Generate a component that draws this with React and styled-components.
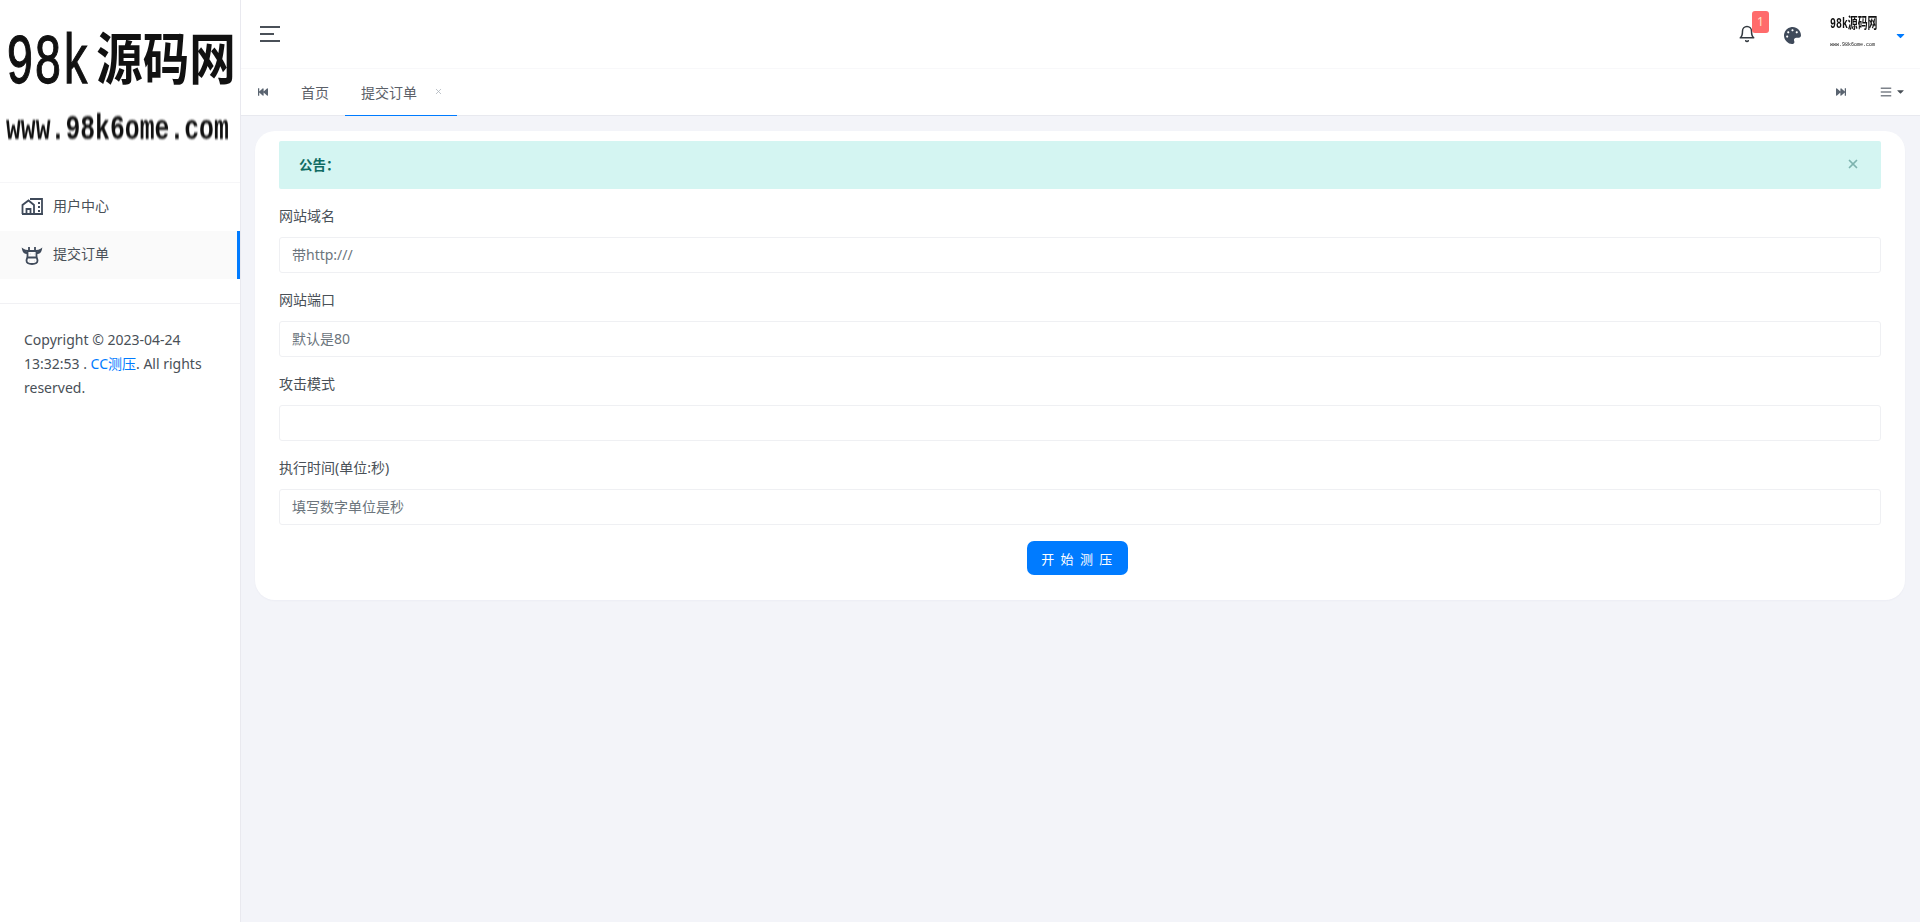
import React from 'react';
import styled, { createGlobalStyle } from 'styled-components';
import { FaPalette, FaFastBackward, FaFastForward, FaBars, FaCaretDown } from 'react-icons/fa';
import { FiBell, FiX } from 'react-icons/fi';

const GlobalStyle = createGlobalStyle`
  html, body {
    margin: 0;
    height: 100%;
    background: #f3f4f9;
    font-family: "Noto Sans", "Noto Sans CJK SC", sans-serif;
    font-size: 14px;
    color: #495057;
  }
  * { box-sizing: border-box; }
`;

const Page = styled.div`
  display: flex;
  height: 922px;
  overflow: hidden;
`;

const Sidebar = styled.aside`
  flex: 0 0 241px;
  width: 241px;
  min-width: 0;
  overflow: hidden;
  background: #fff;
  border-right: 1px solid #e9e9ef;
`;

const LogoBox = styled.div`
  height: 183px;
  border-bottom: 1px solid #f6f6f8;
  padding: 29px 0 0 6px;
`;

const LogoMain = styled.div`
  font-family: "Liberation Mono", "Noto Sans CJK SC", monospace;
  font-weight: 700;
  font-size: 56px;
  line-height: 70px;
  color: #111;
  white-space: nowrap;
  transform-origin: left top;
  transform: scaleX(0.83);
  filter: blur(0.7px);
`;

const LogoDigits = styled.span`
  display: inline-block;
  font-weight: 400;
  -webkit-text-stroke: 1px #111;
  transform: scaleY(1.25);
  margin-right: 8px;
`;

const LogoSub = styled.div`
  font-family: "Liberation Mono", monospace;
  font-weight: 700;
  font-size: 25px;
  line-height: 30px;
  margin-top: 17px;
  color: #111;
  white-space: nowrap;
  transform-origin: left center;
  transform: scale(0.99, 1.4);
  filter: blur(0.6px);
`;

const Nav = styled.nav`
  padding-bottom: 24px;
  border-bottom: 1px solid #f1f1f4;
`;

const NavItem = styled.div`
  display: flex;
  align-items: center;
  height: 48px;
  padding: 0 0 5px 21px;
  background: ${(p) => (p.$active ? '#fafafa' : '#fff')};
  border-right: 3px solid ${(p) => (p.$active ? '#007bff' : 'transparent')};
  color: #495057;
`;

const NavIcon = styled.svg`
  width: 22px;
  height: 22px;
  margin-top: 3px;
  margin-right: 10px;
  color: #3f4a5a;
`;

const Copy = styled.p`
  margin: 24px 20px 0 24px;
  font-size: 14px;
  line-height: 24px;
  color: #495057;
`;

const CopyLink = styled.a`
  color: #007bff;
`;

const Main = styled.main`
  flex: 1;
  min-width: 0;
`;

const Header = styled.header`
  display: flex;
  align-items: center;
  justify-content: space-between;
  height: 69px;
  padding: 0 0 0 19px;
  background: #fff;
  border-bottom: 1px solid #f8f8fa;
`;

const Burger = styled.div`
  display: flex;
  flex-direction: column;
  gap: 5px;
  width: 20px;
`;

const BurgerLine = styled.span`
  display: block;
  height: 2px;
  width: ${(p) => p.$w}px;
  background: #4a5058;
`;

const HeaderRight = styled.div`
  display: flex;
  align-items: center;
`;

const BellWrap = styled.div`
  position: relative;
  display: flex;
  width: 18px;
  height: 20px;
  margin-right: 28px;
  margin-top: 2px;
  color: #343a40;
`;

const Badge = styled.span`
  position: absolute;
  left: 14px;
  top: -14px;
  width: 17px;
  height: 22px;
  border-radius: 3px;
  background: #ff6b6b;
  color: #ffe3c8;
  font-size: 12px;
  line-height: 22px;
  text-align: center;
`;

const Palette = styled(FaPalette)`
  width: 17px;
  height: 17px;
  margin-right: 29px;
  margin-top: 2px;
  color: #3f4a5a;
`;

const Avatar = styled.div`
  width: 50px;
  height: 36px;
  margin-top: -3px;
  filter: blur(0.3px);
`;

const AvatarMain = styled.div`
  font-family: "Liberation Mono", "Noto Sans CJK SC", monospace;
  font-weight: 700;
  font-size: 15px;
  line-height: 20px;
  color: #111;
  white-space: nowrap;
  transform-origin: left top;
  transform: scaleX(0.66);
`;

const AvatarSub = styled.div`
  font-family: "Liberation Mono", monospace;
  font-size: 5px;
  line-height: 8px;
  margin-top: 6px;
  color: #111;
  white-space: nowrap;
`;

const UserCaret = styled(FaCaretDown)`
  width: 13px;
  height: 13px;
  margin: 2px 13px 0 14px;
  color: #007bff;
`;

const TabBar = styled.div`
  display: flex;
  align-items: center;
  height: 47px;
  background: #fff;
  border-bottom: 1px solid #e8e9ef;
`;

const TabArrow = styled.span`
  display: flex;
  width: ${(p) => p.$w}px;
  justify-content: center;
  color: #5a6470;
  font-size: 10px;
`;

const Tab = styled.div`
  display: flex;
  align-items: center;
  align-self: stretch;
  padding: 0 16px 1px;
  margin-bottom: -1px;
  color: #5b6068;
  border-bottom: 1px solid ${(p) => (p.$active ? '#007bff' : 'transparent')};
`;

const TabClose = styled(FiX)`
  width: 9px;
  height: 9px;
  margin-left: 17px;
  margin-right: -2px;
  color: #aab0b8;
`;

const TabSpacer = styled.div`
  flex: 1;
`;

const TabMenu = styled.span`
  display: flex;
  align-items: center;
  gap: 3px;
  width: 40px;
  margin-left: 20px;
  color: #7d828a;
  font-size: 12px;
`;

const MenuCaret = styled(FaCaretDown)`
  width: 11px;
  height: 11px;
  margin-top: -2px;
  color: #495057;
`;

const Card = styled.section`
  margin: 15px 15px 0 14px;
  padding: 10px 24px 25px;
  background: #fff;
  border-radius: 20px;
  box-shadow: 0 1px 2px rgba(30, 40, 80, 0.03);
`;

const Alert = styled.div`
  display: flex;
  align-items: center;
  justify-content: space-between;
  height: 48px;
  padding: 0 21px 2px 20px;
  margin-bottom: 17px;
  background: #d4f5f2;
  border-radius: 2px;
  color: #0f6b62;
  font-weight: 700;
  font-size: 13.5px;
`;

const AlertClose = styled(FiX)`
  width: 14px;
  height: 14px;
  color: #7eb3af;
  stroke-width: 3;
`;

const Field = styled.div`
  margin-bottom: 17px;
`;

const Label = styled.label`
  display: block;
  height: 21px;
  line-height: 20px;
  margin-bottom: 10px;
  color: #495057;
`;

const Input = styled.input`
  display: block;
  width: 100%;
  height: 36px;
  padding: 0 12px 2px;
  border: 1px solid #eff0f3;
  border-radius: 3px;
  background: #fff;
  font: inherit;
  outline: none;
  &::placeholder {
    color: #6c757d;
    opacity: 1;
  }
`;

const Actions = styled.div`
  display: flex;
  justify-content: center;
`;

const Submit = styled.button`
  width: 101px;
  height: 34px;
  margin: -1px 5px 0 0;
  border: 0;
  border-radius: 7px;
  background: #007bff;
  color: #fff;
  font-family: inherit;
  font-size: 13px;
  letter-spacing: 1.5px;
`;

const HouseIcon = () => (
  <NavIcon viewBox="0 0 22 18" fill="none" stroke="currentColor" strokeWidth="1.8">
    <path d="M1 17h21M1.500 17V8L7.500 3.500 13 8v9" />
    <path d="M5.500 17v-5h4v5" />
    <path d="M9 2h12v15" />
    <path d="M17 6h2M17 10h2M17 14h2" />
  </NavIcon>
);

const CowIcon = () => (
  <NavIcon viewBox="0 0 22 22" fill="none" stroke="currentColor" strokeWidth="1.8">
    <path d="M6 10c-2 0-3.500-1-4-3.500 1.500 1 3 1.500 5 1.500h8c2 0 3.500-.5 5-1.500-.5 2.500-2 3.500-4 3.500" />
    <path d="M6.500 8v5c0 2-1 3-1 4.500C5.500 19.500 7 21 11 21s5.500-1.500 5.500-3.500c0-1.500-1-2.500-1-4.500V8" />
    <path d="M6.500 14.500h9M8.500 18h.1M13.500 18h.1M9 11h.1M13 11h.1M8 4v3M14 4v3" />
  </NavIcon>
);

export default function App() {
  return (
    <>
      <GlobalStyle />
      <Page>
        <Sidebar>
          <LogoBox>
            <LogoMain>
              <LogoDigits>98k</LogoDigits>源码网
            </LogoMain>
            <LogoSub>www.98k6ome.com</LogoSub>
          </LogoBox>
          <Nav>
            <NavItem>
              <HouseIcon />
              用户中心
            </NavItem>
            <NavItem $active>
              <CowIcon />
              提交订单
            </NavItem>
          </Nav>
          <Copy>
            Copyright © 2023-04-24 13:32:53 . <CopyLink>CC测压</CopyLink>. All rights reserved.
          </Copy>
        </Sidebar>
        <Main>
          <Header>
            <Burger>
              <BurgerLine $w={20} />
              <BurgerLine $w={14} />
              <BurgerLine $w={20} />
            </Burger>
            <HeaderRight>
              <BellWrap>
                <FiBell size={18} />
                <Badge>1</Badge>
              </BellWrap>
              <Palette />
              <Avatar>
                <AvatarMain>98k源码网</AvatarMain>
                <AvatarSub>www.98k6ome.com</AvatarSub>
              </Avatar>
              <UserCaret />
            </HeaderRight>
          </Header>
          <TabBar>
            <TabArrow $w={44}>
              <FaFastBackward />
            </TabArrow>
            <Tab>首页</Tab>
            <Tab $active>
              提交订单
              <TabClose />
            </Tab>
            <TabSpacer />
            <TabArrow $w={38}>
              <FaFastForward />
            </TabArrow>
            <TabMenu>
              <FaBars />
              <MenuCaret />
            </TabMenu>
          </TabBar>
          <Card>
            <Alert>
              公告：
              <AlertClose />
            </Alert>
            <Field>
              <Label>网站域名</Label>
              <Input placeholder="带http:///" />
            </Field>
            <Field>
              <Label>网站端口</Label>
              <Input placeholder="默认是80" />
            </Field>
            <Field>
              <Label>攻击模式</Label>
              <Input />
            </Field>
            <Field>
              <Label>执行时间(单位:秒)</Label>
              <Input placeholder="填写数字单位是秒" />
            </Field>
            <Actions>
              <Submit>开 始 测 压</Submit>
            </Actions>
          </Card>
        </Main>
      </Page>
    </>
  );
}
